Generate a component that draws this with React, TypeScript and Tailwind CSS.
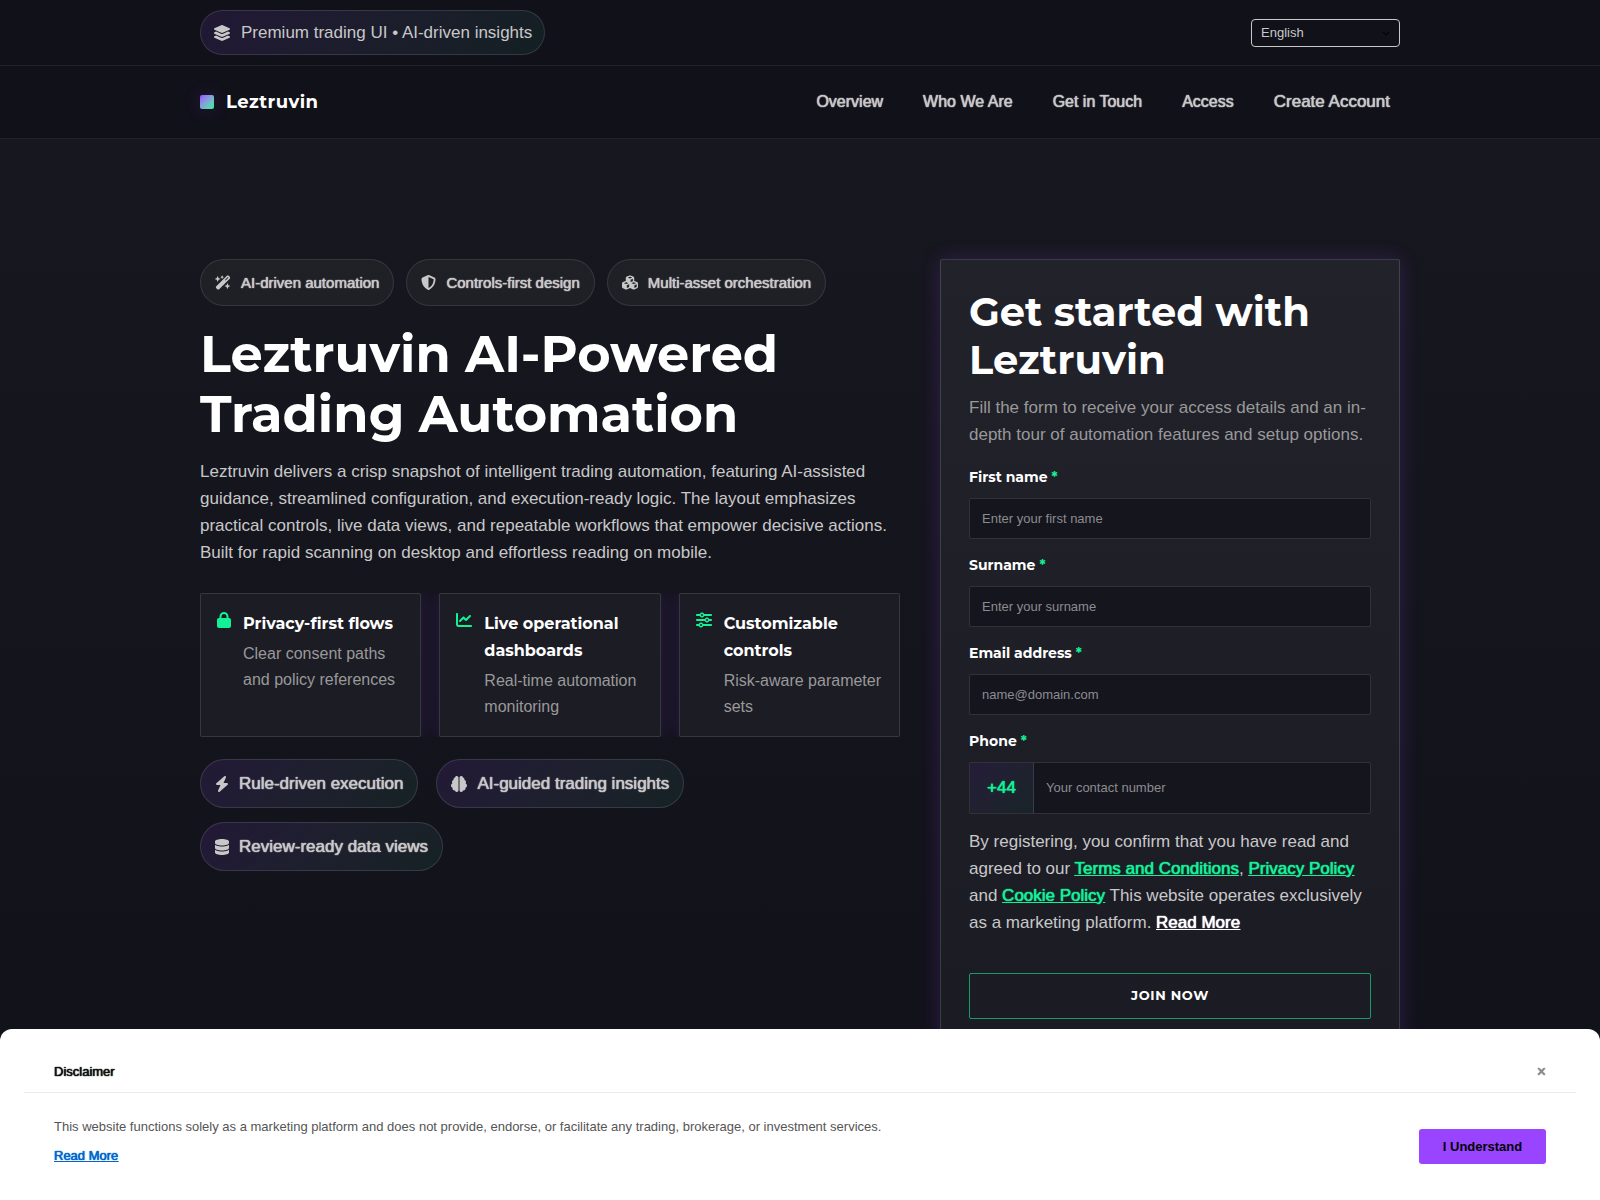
import React, { useState } from 'react';
import {
  FaBolt,
  FaBrain,
  FaChartLine,
  FaChevronDown,
  FaCubes,
  FaDatabase,
  FaLayerGroup,
  FaLock,
  FaShieldHalved,
  FaSliders,
  FaWandMagicSparkles,
} from 'react-icons/fa6';

const navLinks = [
  { label: 'Overview', size: 'text-base' },
  { label: 'Who We Are', size: 'text-base' },
  { label: 'Get in Touch', size: 'text-base' },
  { label: 'Access', size: 'text-base' },
  { label: 'Create Account', size: 'text-[17px]' },
];

const chips = [
  { icon: FaWandMagicSparkles, size: 'w-4', label: 'AI-driven automation' },
  { icon: FaShieldHalved, size: 'w-[15px]', label: 'Controls-first design' },
  { icon: FaCubes, size: 'w-4', label: 'Multi-asset orchestration' },
];

const features = [
  { icon: FaLock, size: 'w-[14px]', title: 'Privacy-first flows', text: 'Clear consent paths and policy references' },
  { icon: FaChartLine, size: 'w-4', title: 'Live operational dashboards', text: 'Real-time automation monitoring' },
  { icon: FaSliders, size: 'w-4', title: 'Customizable controls', text: 'Risk-aware parameter sets' },
];

const pills = [
  { icon: FaBolt, size: 'w-[14px]', label: 'Rule-driven execution' },
  { icon: FaBrain, size: 'w-4', label: 'AI-guided trading insights' },
  { icon: FaDatabase, size: 'w-[14px]', label: 'Review-ready data views' },
];

const fields = [
  { id: 'first_name', label: 'First name', type: 'text', placeholder: 'Enter your first name' },
  { id: 'surname', label: 'Surname', type: 'text', placeholder: 'Enter your surname' },
  { id: 'email', label: 'Email address', type: 'email', placeholder: 'name@domain.com' },
];

// regular cut thickened a little, keeps the regular widths
const strong = '[text-shadow:0_0_1px_currentColor,0_0_1px_currentColor]';

function TopBar() {
  return (
    <div className="border-b border-white/8 bg-[#11111a]">
      <div className="mx-auto flex max-w-[1200px] items-center justify-between py-[10px]">
        <div className="flex items-center gap-[10px] rounded-full border border-white/12 bg-linear-135 from-[#9945ff]/12 to-[#14f195]/7 px-3 py-2 text-[17px] leading-[27px]">
          <FaLayerGroup className="h-4 w-[18px]" />
          Premium trading UI • AI-driven insights
        </div>
        <div className="relative">
          <select
            aria-label="Language"
            className="block h-7 w-[149px] appearance-none rounded-[4px] border border-[#c8c8c8] bg-[#11111a] px-[9px] text-[13px] text-[#c8c8c8]"
          >
            <option>English</option>
          </select>
          <FaChevronDown className="pointer-events-none absolute top-[10px] right-[10px] size-2 text-black" />
        </div>
      </div>
    </div>
  );
}

function Header() {
  return (
    <header className="border-b border-white/8 bg-[#11111a]">
      <div className="mx-auto flex h-18 max-w-[1200px] items-center justify-between">
        <a href="#" className="flex items-center gap-3 font-['Montserrat','Open_Sans',sans-serif] text-lg font-bold tracking-wide text-white">
          <span className="size-[14px] rounded-[2px] bg-linear-135 from-[#9945ff] to-[#14f195] shadow-[0_0_18px_rgba(153,69,255,0.2)]" />
          Leztruvin
        </a>
        <nav className="flex items-center gap-5">
          {navLinks.map(({ label, size }) => (
            <a key={label} href="#" className={`px-[10px] ${size} ${strong}`}>
              {label}
            </a>
          ))}
        </nav>
      </div>
    </header>
  );
}

function Hero() {
  return (
    <section>
      <div className="flex flex-wrap gap-3">
        {chips.map(({ icon: Icon, size, label }) => (
          <span
            key={label}
            className={`flex items-center gap-[10px] rounded-full border border-white/10 bg-white/4 px-[14px] py-[10px] text-[15px] leading-[25px] ${strong}`}
          >
            <Icon className={`h-[15px] ${size}`} />
            {label}
          </span>
        ))}
      </div>
      <h1 className="mt-[18px] font-['Montserrat','Open_Sans',sans-serif] text-[51px] leading-[60px] font-bold text-white">
        Leztruvin AI-Powered Trading Automation
      </h1>
      <p className="mt-[14px] text-[17px] leading-[27px]">
        Leztruvin delivers a crisp snapshot of intelligent trading automation, featuring AI-assisted guidance,
        streamlined configuration, and execution-ready logic. The layout emphasizes practical controls, live data
        views, and repeatable workflows that empower decisive actions. Built for rapid scanning on desktop and
        effortless reading on mobile.
      </p>
      <div className="mt-[27px] grid grid-cols-1 gap-[18px] overflow-hidden md:grid-cols-3">
        {features.map(({ icon: Icon, size, title, text }) => (
          <div
            key={title}
            className="flex gap-3 rounded-[2px] border border-white/12 bg-[#1c1c25] p-4 shadow-[0_0_18px_rgba(153,69,255,0.18)]"
          >
            <Icon className={`mt-[2px] h-4 shrink-0 text-[#14f195] ${size}`} />
            <div>
              <h3 className="font-['Montserrat','Open_Sans',sans-serif] text-base leading-[27px] font-bold text-white">
                {title}
              </h3>
              <p className="mt-1 text-base leading-[26px] text-[#999]">{text}</p>
            </div>
          </div>
        ))}
      </div>
      <div className="mt-[22px] flex flex-wrap gap-x-[18px] gap-y-[14px]">
        {pills.map(({ icon: Icon, size, label }) => (
          <span
            key={label}
            className={`flex items-center gap-[10px] rounded-full border border-white/12 bg-linear-135 from-[#9945ff]/12 to-[#14f195]/7 px-[14px] py-[10px] text-[17px] leading-[27px] ${strong}`}
          >
            <Icon className={`h-4 ${size}`} />
            {label}
          </span>
        ))}
      </div>
    </section>
  );
}

function FieldLabel({ htmlFor, children }: { htmlFor: string; children: React.ReactNode }) {
  return (
    <label
      htmlFor={htmlFor}
      className="mb-2 block font-['Montserrat','Open_Sans',sans-serif] text-sm leading-[25px] font-bold text-white"
    >
      {children} <span className="text-[#14f195]">*</span>
    </label>
  );
}

function SignupForm() {
  const [values, setValues] = useState<Record<string, string>>({});

  const handleChange = (e: React.ChangeEvent<HTMLInputElement>) => {
    const { id, value } = e.target;
    setValues((values) => ({ ...values, [id]: value }));
  };

  return (
    <form
      onSubmit={(e) => e.preventDefault()}
      className="rounded-[2px] border border-white/14 bg-linear-to-b from-[#22222b] to-[#1b1b24] p-7 shadow-[0_0_20px_rgba(153,69,255,0.2)]"
    >
      <h2 className="font-['Montserrat','Open_Sans',sans-serif] text-[40px] leading-[48px] font-bold text-white">
        Get started with Leztruvin
      </h2>
      <p className="mt-[10px] text-[17px] leading-[27px] text-[#999]">
        Fill the form to receive your access details and an in-depth tour of automation features and setup options.
      </p>

      <div className="mt-[17px] flex flex-col gap-[14px]">
        {fields.map((field) => (
          <div key={field.id}>
            <FieldLabel htmlFor={field.id}>{field.label}</FieldLabel>
            <input
              type={field.type}
              id={field.id}
              placeholder={field.placeholder}
              className="block h-[41px] w-full rounded-[2px] border border-white/12 bg-[#15151e] px-3 text-[13px] text-white placeholder:text-[#8c8c8f]"
              value={values[field.id] || ''}
              onChange={handleChange}
            />
          </div>
        ))}

        <div>
          <FieldLabel htmlFor="phone">Phone</FieldLabel>
          <div className="flex h-[52px] rounded-[2px] border border-white/12 bg-[#15151e]">
            <span
              className={`flex w-16 items-center justify-center border-r border-white/12 bg-linear-135 from-[#9945ff]/12 to-[#14f195]/7 text-[17px] text-[#14f195] ${strong}`}
            >
              +44
            </span>
            <input
              type="tel"
              id="phone"
              placeholder="Your contact number"
              className="min-w-0 flex-1 bg-transparent px-3 text-[13px] text-white placeholder:text-[#8c8c8f]"
              value={values.phone || ''}
              onChange={handleChange}
            />
          </div>
        </div>
      </div>

      <p className="mt-[14px] text-[17px] leading-[27px]">
        By registering, you confirm that you have read and agreed to our{' '}
        <a href="#" className={`text-[#14f195] underline ${strong}`}>Terms and Conditions</a>,{' '}
        <a href="#" className={`text-[#14f195] underline ${strong}`}>Privacy Policy</a> and{' '}
        <a href="#" className={`text-[#14f195] underline ${strong}`}>Cookie Policy</a> This website operates
        exclusively as a marketing platform.{' '}
        <a href="#" className={`text-white underline ${strong}`}>Read More</a>
      </p>

      <button
        type="submit"
        className="mt-[37px] h-[46px] w-full rounded-[2px] border border-[#14f195]/60 font-['Montserrat','Open_Sans',sans-serif] text-[13px] font-bold tracking-wider text-white"
      >
        JOIN NOW
      </button>
    </form>
  );
}

function Disclaimer({ onClose }: { onClose: () => void }) {
  return (
    <aside className="fixed inset-x-0 bottom-0 rounded-t-xl bg-white px-6 pt-[33px] pb-9 text-[13px] text-[#555]">
      <div className="flex items-center justify-between border-b border-[#ebebeb] px-[30px] pb-[10px]">
        <h4 className={`leading-5 text-[#111] ${strong}`}>Disclaimer</h4>
        <button type="button" aria-label="Close" onClick={onClose} className={`text-base leading-5 text-[#888] ${strong}`}>
          ×
        </button>
      </div>
      <div className="flex items-end justify-between px-[30px] pt-6">
        <div>
          <p className="leading-5">
            This website functions solely as a marketing platform and does not provide, endorse, or facilitate any
            trading, brokerage, or investment services.
          </p>
          <a href="#" className={`mt-[11px] block leading-4 text-[#0066cc] underline ${strong}`}>Read More</a>
        </div>
        <button
          type="button"
          onClick={onClose}
          className="h-[35px] w-[127px] rounded-[3px] bg-[#9945ff] font-bold text-black"
        >
          I Understand
        </button>
      </div>
    </aside>
  );
}

export default function App() {
  const [showDisclaimer, setShowDisclaimer] = useState(true);

  return (
    <div className="min-h-screen bg-linear-to-b from-[#181820] to-[#11111a] font-['Liberation_Sans',Arial,sans-serif] text-[#c8c8c8]">
      <TopBar />
      <Header />
      <main className="mx-auto grid max-w-[1200px] grid-cols-1 items-start gap-10 py-[120px] lg:grid-cols-[minmax(0,35fr)_minmax(0,23fr)]">
        <Hero />
        <SignupForm />
      </main>
      {showDisclaimer && <Disclaimer onClose={() => setShowDisclaimer(false)} />}
    </div>
  );
}
